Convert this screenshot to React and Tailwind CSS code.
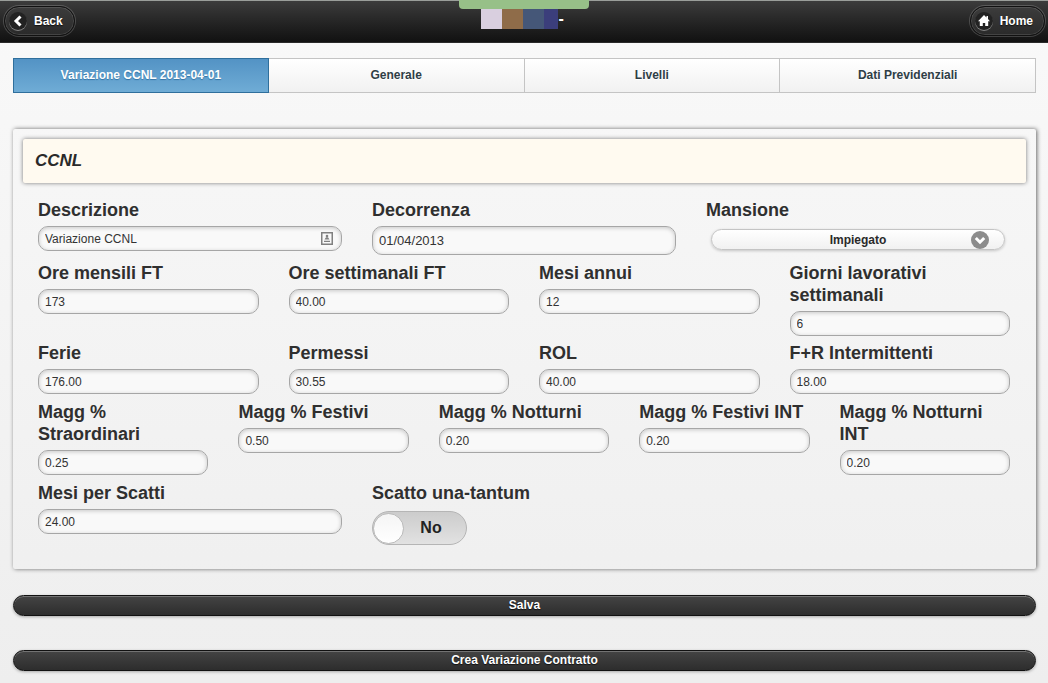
import React, { useState } from 'react';

const tabs = ['Variazione CCNL 2013-04-01', 'Generale', 'Livelli', 'Dati Previdenziali'];

const yearFields = [
  { id: 'ore-mensili', label: 'Ore mensili FT', value: '173' },
  { id: 'ore-settimanali', label: 'Ore settimanali FT', value: '40.00' },
  { id: 'mesi-annui', label: 'Mesi annui', value: '12' },
  { id: 'giorni', label: 'Giorni lavorativi settimanali', value: '6' },
  { id: 'ferie', label: 'Ferie', value: '176.00' },
  { id: 'permessi', label: 'Permessi', value: '30.55' },
  { id: 'rol', label: 'ROL', value: '40.00' },
  { id: 'fr-intermittenti', label: 'F+R Intermittenti', value: '18.00' },
];

const surchargeFields = [
  { id: 'magg-straordinari', label: 'Magg % Straordinari', value: '0.25' },
  { id: 'magg-festivi', label: 'Magg % Festivi', value: '0.50' },
  { id: 'magg-notturni', label: 'Magg % Notturni', value: '0.20' },
  { id: 'magg-festivi-int', label: 'Magg % Festivi INT', value: '0.20' },
  { id: 'magg-notturni-int', label: 'Magg % Notturni INT', value: '0.20' },
];

const inputClass =
  'block w-full rounded-[10px] border border-[#a6a6a6] bg-[#f9f9f9] px-1.5 text-[#333] shadow-[inset_0_1px_4px_rgba(0,0,0,0.2)] outline-none';

const Label = ({ id, children }) => (
  <label htmlFor={id} className="mb-[5px] block text-[18px] leading-[22px] font-bold text-[#2f2f2f]">
    {children}
  </label>
);

const Field = ({ id, label, value }) => (
  <div>
    <Label id={id}>{label}</Label>
    <input id={id} type="text" defaultValue={value} className={`${inputClass} h-[25px] text-xs`} />
  </div>
);

const HeaderButton = ({ icon, children }) => (
  <a
    href="#"
    className="flex h-[30px] items-center gap-[7px] rounded-full border border-[#111] bg-linear-to-b from-[#3c3c3c] to-[#2a2a2a] pr-[11px] pl-1 text-xs font-bold text-white shadow-[inset_0_0_0_1px_rgba(255,255,255,0.12),0_0_0_1px_rgba(255,255,255,0.18)] [text-shadow:0_1px_1px_#111]"
  >
    <span className="flex size-[18px] items-center justify-center rounded-full bg-[#222] shadow-[0_1px_0_rgba(255,255,255,0.4)]">
      {icon}
    </span>
    {children}
  </a>
);

const BackIcon = () => (
  <svg viewBox="0 0 18 18" className="size-[18px]" fill="none" stroke="#fff" strokeWidth="3">
    <path d="M11.5 4.5 7 9l4.500 4.500" />
  </svg>
);

const HomeIcon = () => (
  <svg viewBox="0 0 18 18" className="size-[18px]" fill="#fff">
    <path d="M9 3 3 9.200H4.800V14h3v-3h2.400v3h3V9.200H15L13 7V4h-1.500v1.500Z" />
  </svg>
);

const ActionButton = ({ children }) => (
  <button
    type="button"
    className="block h-[21px] w-full rounded-full border border-[#111] bg-linear-to-b from-[#444] to-[#2d2d2d] text-xs leading-[19px] font-bold text-white shadow-[inset_0_1px_0_rgba(255,255,255,0.25),0_1px_3px_rgba(0,0,0,0.3)] [text-shadow:0_1px_1px_#111]"
  >
    {children}
  </button>
);

const App = () => {
  const [tab, setTab] = useState(0);
  const [oneOff, setOneOff] = useState(false);

  return (
    <div className="min-h-screen bg-linear-to-b from-[#f9f9f9] to-[#eee] pb-3 font-['Liberation_Sans',Arial,sans-serif] text-[#333]">
      <header className="relative flex h-[43px] items-start justify-between border-t border-b border-t-[#9a9e9a] border-b-[#2a2a2a] bg-linear-to-b from-[#3c3c3c] to-[#111] pt-[5px] pr-[3px] pl-1">
        <div className="absolute -top-px left-1/2 h-[9px] w-[130px] -translate-x-1/2 rounded-b bg-[#97c088]" />
        <HeaderButton icon={<BackIcon />}>Back</HeaderButton>
        <h1 className="mt-[3px] flex h-5 items-center text-base font-bold text-white">
          <span className="h-5 w-[21px] bg-[#d9cfdf]" />
          <span className="h-5 w-[21px] bg-[#8f6c49]" />
          <span className="h-5 w-[21px] bg-[#455778]" />
          <span className="h-5 w-3.5 bg-[#3b3e7b]" />
          <span className="ml-px">-</span>
        </h1>
        <HeaderButton icon={<HomeIcon />}>Home</HeaderButton>
      </header>

      <main className="pt-[15px] pr-3 pl-[13px]">
        <nav className="grid grid-cols-4">
          {tabs.map((name, i) => (
            <button
              key={name}
              type="button"
              onClick={() => setTab(i)}
              className={
                i === tab
                  ? 'h-[35px] border border-[#2f6f9c] bg-linear-to-b from-[#5393c5] to-[#6facd5] pb-0.5 text-xs font-bold text-white [text-shadow:0_1px_1px_#3373a5]'
                  : 'h-[35px] border border-l-0 border-[#c4c4c4] bg-linear-to-b from-white to-[#f1f1f1] pb-0.5 text-xs font-bold text-[#2f3e46] [text-shadow:0_1px_0_#fff]'
              }
            >
              {name}
            </button>
          ))}
        </nav>

        <section className="mt-9 rounded-xs px-2.5 pt-2.5 pb-6 shadow-[1px_0_4px_#666]">
          <h2 className="flex h-11 items-center rounded-xs bg-[#fffaf0] px-3 text-[17px] font-bold text-[#2a2a2a] italic shadow-[0_0_4px_#777]">
            CCNL
          </h2>

          <form className="mt-4 space-y-[7px] pr-4 pl-[15px]">
            <div className="grid grid-cols-3 gap-x-[30px]">
              <div>
                <Label id="descrizione">Descrizione</Label>
                <div className="relative">
                  <input id="descrizione" type="text" defaultValue="Variazione CCNL" className={`${inputClass} h-[25px] text-xs`} />
                  <svg viewBox="0 0 12 13" className="absolute top-1.5 right-[9px] h-[13px] w-3" fill="#808080">
                    <path d="M0 0h12v13H0Zm1.500 1.500v10h9v-10Z" fillRule="evenodd" />
                    <circle cx="6" cy="4" r="1.300" />
                    <path d="M3.500 7.500 5 5.300h2l1.500 2.200ZM3 8.700h6v1.200H3Z" />
                  </svg>
                </div>
              </div>
              <div>
                <Label id="decorrenza">Decorrenza</Label>
                <input id="decorrenza" type="text" defaultValue="01/04/2013" className={`${inputClass} h-[29px] text-[13px]`} />
              </div>
              <div>
                <Label id="mansione">Mansione</Label>
                <div className="relative mx-[5px] mt-2">
                  <select
                    id="mansione"
                    className="block h-[21px] w-full appearance-none rounded-full border border-[#c4c4c4] bg-linear-to-b from-white to-[#f1f1f1] text-center text-xs font-bold text-[#2a2a2a] shadow-[0_1px_3px_rgba(0,0,0,0.2)] [text-align-last:center]"
                  >
                    <option>Impiegato</option>
                  </select>
                  <svg viewBox="0 0 18 18" className="pointer-events-none absolute top-0.5 right-4 size-[18px]" fill="none">
                    <circle cx="9" cy="9" r="9" fill="#8c8c8c" />
                    <path d="M4.800 7 9 11.200 13.200 7" stroke="#fff" strokeWidth="3" />
                  </svg>
                </div>
              </div>
            </div>

            <div className="grid grid-cols-4 gap-x-[30px] gap-y-1.5">
              {yearFields.map((f) => <Field key={f.id} {...f} />)}
            </div>

            <div className="grid grid-cols-5 gap-x-[30px]">
              {surchargeFields.map((f) => <Field key={f.id} {...f} />)}
            </div>

            <div className="grid grid-cols-3 gap-x-[30px]">
              <Field id="mesi-scatti" label="Mesi per Scatti" value="24.00" />
              <div>
                <Label id="una-tantum">Scatto una-tantum</Label>
                <label className="mt-[7px] flex h-[34px] w-[95px] items-center rounded-full border border-[#b5b5b5] bg-linear-to-b from-[#ccc] to-[#e2e2e2] text-base font-bold text-[#222]">
                  <input
                    id="una-tantum"
                    type="checkbox"
                    checked={oneOff}
                    onChange={(e) => setOneOff(e.target.checked)}
                    className="peer sr-only"
                  />
                  <span className="size-[31px] rounded-full border border-[#bbb] bg-linear-to-b from-[#f5f5f5] to-white peer-checked:order-last" />
                  <span className="flex-1 pr-2 text-center">{oneOff ? 'Sì' : 'No'}</span>
                </label>
              </div>
            </div>
          </form>
        </section>

        <div className="mt-[26px] space-y-[34px]">
          <ActionButton>Salva</ActionButton>
          <ActionButton>Crea Variazione Contratto</ActionButton>
        </div>
      </main>
    </div>
  );
};

export default App;
